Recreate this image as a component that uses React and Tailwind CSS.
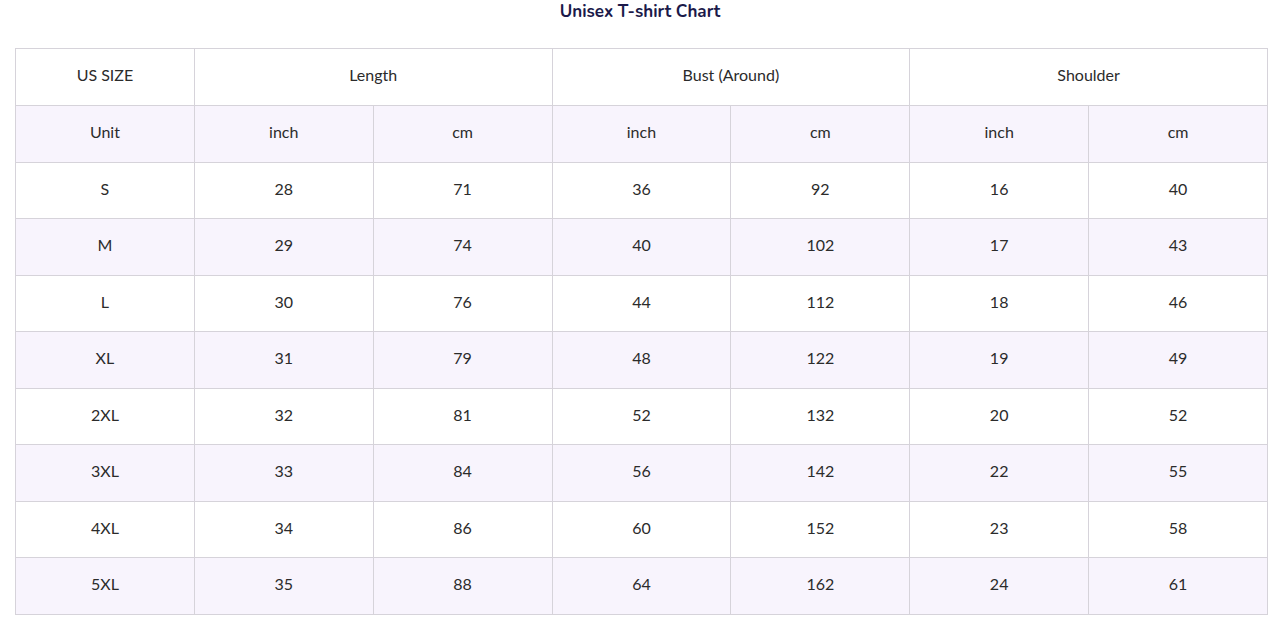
const rows = [
  ["S", 28, 71, 36, 92, 16, 40],
  ["M", 29, 74, 40, 102, 17, 43],
  ["L", 30, 76, 44, 112, 18, 46],
  ["XL", 31, 79, 48, 122, 19, 49],
  ["2XL", 32, 81, 52, 132, 20, 52],
  ["3XL", 33, 84, 56, 142, 22, 55],
  ["4XL", 34, 86, 60, 152, 23, 58],
  ["5XL", 35, 88, 64, 162, 24, 61],
];

function Cell({ children, colSpan }) {
  return (
    <td
      colSpan={colSpan}
      className="border border-[#d6d3da] text-center align-middle pb-[4px]"
    >
      {children}
    </td>
  );
}

export default function App() {
  return (
    <div className="bg-white w-[1280px] h-[624px] font-['Lato',sans-serif] text-[16px] text-[#2b2b2b]">
      <h2 className="text-center pt-[2px] text-[17px] leading-[20px] font-bold text-[#1b1a4a] font-['Nunito','Lato',sans-serif]">
        Unisex T-shirt Chart
      </h2>
      <div className="pt-[26px] pl-[15px]">
        <table className="w-[1253px] table-fixed border-collapse">
          <tbody>
            <tr className="h-[57px] bg-white">
              <Cell>US SIZE</Cell>
              <Cell colSpan={2}>Length</Cell>
              <Cell colSpan={2}>Bust (Around)</Cell>
              <Cell colSpan={2}>Shoulder</Cell>
            </tr>
            <tr className="h-[57px] bg-[#f8f4fd]">
              <Cell>Unit</Cell>
              <Cell>inch</Cell>
              <Cell>cm</Cell>
              <Cell>inch</Cell>
              <Cell>cm</Cell>
              <Cell>inch</Cell>
              <Cell>cm</Cell>
            </tr>
            {rows.map((r, i) => (
              <tr
                key={r[0]}
                className={i % 2 === 0 ? "h-[56px] bg-white" : "h-[57px] bg-[#f8f4fd]"}
              >
                {r.map((v, j) => (
                  <Cell key={j}>{v}</Cell>
                ))}
              </tr>
            ))}
          </tbody>
        </table>
      </div>
    </div>
  );
}
